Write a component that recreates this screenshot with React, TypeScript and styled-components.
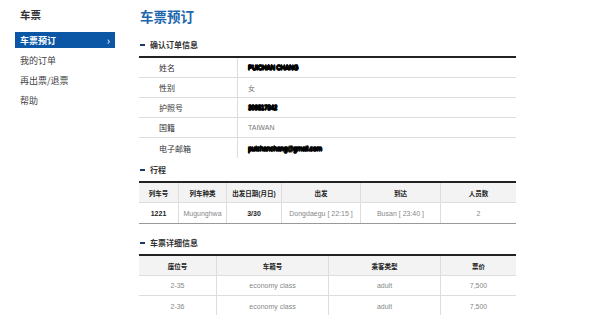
import React from "react";
import styled, { createGlobalStyle } from "styled-components";

const Global = createGlobalStyle`
  html, body { margin: 0; padding: 0; background: #fff; }
  body { font-family: "Liberation Sans", "Noto Sans CJK SC", sans-serif; }
`;

const Page = styled.div`
  width: 600px;
  height: 315px;
  display: flex;
  overflow: hidden;
`;

const Sidebar = styled.div`
  width: 130px;
  flex: none;
  padding: 7px 0 0 15px;
  box-sizing: border-box;
`;

const SideTitle = styled.div`
  font-family: "Noto Sans CJK SC", sans-serif;
  font-size: 10.5px;
  font-weight: 700;
  color: #333;
  line-height: 16px;
  padding-left: 5px;
  margin-bottom: 9px;
`;

const MenuItem = styled.div<{ $active?: boolean }>`
  width: 100px;
  height: 16px;
  margin-bottom: 4px;
  padding-left: 5px;
  box-sizing: border-box;
  display: flex;
  align-items: center;
  justify-content: space-between;
  font-family: "Noto Sans CJK SC", sans-serif;
  font-size: 9px;
  color: ${(p) => (p.$active ? "#fff" : "#444")};
  background: ${(p) => (p.$active ? "#0b57a6" : "transparent")};
  font-weight: ${(p) => (p.$active ? 700 : 400)};
`;

const Chevron = styled.span`
  font-size: 11px;
  padding-right: 5px;
  color: #fff;
  font-weight: 400;
`;

const Main = styled.div`
  flex: none;
  width: 377px;
  margin-left: 9px;
  display: flex;
  flex-direction: column;
`;

const Title = styled.div`
  font-family: "Noto Sans CJK SC", sans-serif;
  font-size: 13.5px;
  font-weight: 700;
  color: #1d67ad;
  line-height: 20px;
  margin-top: 6px;
  padding-left: 1px;
`;

const SectionHead = styled.div<{ $top: number }>`
  display: flex;
  align-items: center;
  margin-top: ${(p) => p.$top}px;
  height: 12px;
  padding-left: 1px;
  font-family: "Noto Sans CJK SC", sans-serif;
  font-size: 8px;
  font-weight: 700;
  color: #333;
  &::before {
    content: "";
    width: 5px;
    height: 2px;
    background: #1b3b66;
    margin-right: 5px;
  }
`;

const InfoTable = styled.div`
  margin-top: 6px;
  border-top: 2px solid #222;
`;

const InfoRow = styled.div<{ $last?: boolean }>`
  display: grid;
  grid-template-columns: 99px 1fr;
  height: 20px;
  border-bottom: ${(p) => (p.$last ? "none" : "1px solid #ddd")};
  box-sizing: border-box;
`;

const InfoLabel = styled.div`
  display: flex;
  align-items: center;
  padding-left: 20px;
  border-right: 1px solid #ddd;
  font-family: "Noto Sans CJK SC", sans-serif;
  font-size: 8px;
  color: #333;
`;

const InfoValue = styled.div<{ $redacted?: boolean }>`
  display: flex;
  align-items: center;
  padding-left: 10px;
  font-family: "Liberation Sans", "Noto Sans CJK SC", sans-serif;
  font-size: ${(p) => (p.$redacted ? "6.5px" : "7px")};
  color: ${(p) => (p.$redacted ? "#000" : "#777")};
  font-weight: ${(p) => (p.$redacted ? 700 : 400)};
  text-shadow: ${(p) =>
    p.$redacted ? "0.6px 0 #000, -0.6px 0 #000, 0 0.6px #000, 0 -0.6px #000" : "none"};
  letter-spacing: ${(p) => (p.$redacted ? "-0.4px" : "0")};
`;

const Grid = styled.div<{ $cols: string; $bottom: string }>`
  margin-top: 6px;
  border-top: 2px solid #222;
  border-bottom: ${(p) => p.$bottom};
  display: grid;
  grid-template-columns: ${(p) => p.$cols};
`;

const Cell = styled.div<{ $head?: boolean; $bold?: boolean; $first?: boolean; $lastRow?: boolean }>`
  height: 20px;
  box-sizing: border-box;
  display: flex;
  align-items: center;
  justify-content: center;
  background: ${(p) => (p.$head ? "#f3f3f3" : "#fff")};
  border-left: ${(p) => (p.$first ? "none" : "1px solid #ddd")};
  border-bottom: ${(p) => (p.$lastRow ? "none" : "1px solid #ddd")};
  font-family: "Liberation Sans", "Noto Sans CJK SC", sans-serif;
  font-size: ${(p) => (p.$head ? "6.5px" : "7px")};
  font-weight: ${(p) => (p.$head || p.$bold ? 700 : 400)};
  color: ${(p) => (p.$head || p.$bold ? "#222" : "#888")};
  white-space: nowrap;
`;

const info = [
  { k: "姓名", v: "PUICHAN CHANG", r: true },
  { k: "性别", v: "女" },
  { k: "护照号", v: "309817842", r: true },
  { k: "国籍", v: "TAIWAN" },
  { k: "电子邮箱", v: "puichanchang@gmail.com", r: true },
];

const tripHead = ["列车号", "列车种类", "出发日期(月日)", "出发", "到达", "人员数"];
const tripRow = ["1221", "Mugunghwa", "3/30", "Dongdaegu  [ 22:15 ]", "Busan  [ 23:40 ]", "2"];

const ticketHead = ["座位号", "车箱号", "乘客类型", "票价"];
const ticketRows = [
  ["2-35", "economy class", "adult", "7,500"],
  ["2-36", "economy class", "adult", "7,500"],
];

export default function App() {
  return (
    <Page>
      <Global />
      <Sidebar>
        <SideTitle>车票</SideTitle>
        <MenuItem $active>
          <span>车票预订</span>
          <Chevron>›</Chevron>
        </MenuItem>
        <MenuItem>我的订单</MenuItem>
        <MenuItem>再出票/退票</MenuItem>
        <MenuItem>帮助</MenuItem>
      </Sidebar>
      <Main>
        <Title>车票预订</Title>
        <SectionHead $top={13}>确认订单信息</SectionHead>
        <InfoTable>
          {info.map((r, i) => (
            <InfoRow key={r.k} $last={i === info.length - 1}>
              <InfoLabel>{r.k}</InfoLabel>
              <InfoValue $redacted={r.r}>{r.v}</InfoValue>
            </InfoRow>
          ))}
        </InfoTable>
        <SectionHead $top={6}>行程</SectionHead>
        <Grid $cols="39px 48px 55px 79px 80px 76px" $bottom="1px solid #999">
          {tripHead.map((h, i) => (
            <Cell key={h} $head $first={i === 0}>
              {h}
            </Cell>
          ))}
          {tripRow.map((c, i) => (
            <Cell key={i} $first={i === 0} $bold={i === 0 || i === 2} $lastRow>
              {c}
            </Cell>
          ))}
        </Grid>
        <SectionHead $top={13}>车票详细信息</SectionHead>
        <Grid $cols="77px 112px 112px 76px" $bottom="2px solid #aaa">
          {ticketHead.map((h, i) => (
            <Cell key={h} $head $first={i === 0}>
              {h}
            </Cell>
          ))}
          {ticketRows.map((row, ri) =>
            row.map((c, i) => (
              <Cell key={ri + "-" + i} $first={i === 0} $lastRow={ri === ticketRows.length - 1}>
                {c}
              </Cell>
            ))
          )}
        </Grid>
      </Main>
    </Page>
  );
}
